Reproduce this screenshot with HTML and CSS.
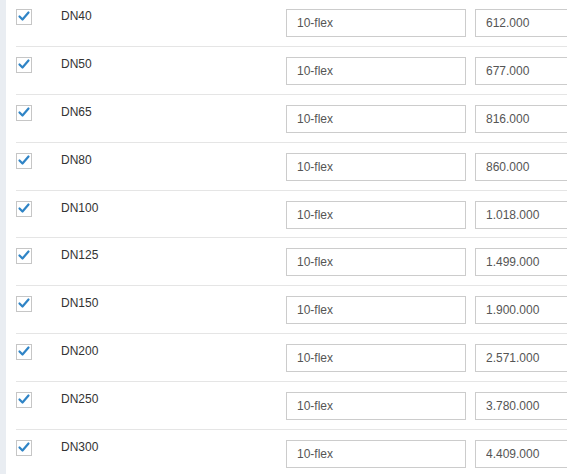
FILE: index.html
```html
<!DOCTYPE html>
<html>
<head>
<meta charset="utf-8">
<link rel="stylesheet" href="styles.css">
</head>
<body>
<div class="page">
  <div class="strip"></div>
  <div class="list">
    <div class="row"><span class="cb"><svg viewBox="0 0 14 14"><path d="M2.5 6.5 L5.5 9.5 L11.5 2.5" /></svg></span><span class="label">DN40</span><input class="field" value="10-flex"><input class="field" value="612.000"></div>
    <div class="row"><span class="cb"><svg viewBox="0 0 14 14"><path d="M2.5 6.5 L5.5 9.5 L11.5 2.5" /></svg></span><span class="label">DN50</span><input class="field" value="10-flex"><input class="field" value="677.000"></div>
    <div class="row"><span class="cb"><svg viewBox="0 0 14 14"><path d="M2.5 6.5 L5.5 9.5 L11.5 2.5" /></svg></span><span class="label">DN65</span><input class="field" value="10-flex"><input class="field" value="816.000"></div>
    <div class="row"><span class="cb"><svg viewBox="0 0 14 14"><path d="M2.5 6.5 L5.5 9.5 L11.5 2.5" /></svg></span><span class="label">DN80</span><input class="field" value="10-flex"><input class="field" value="860.000"></div>
    <div class="row"><span class="cb"><svg viewBox="0 0 14 14"><path d="M2.5 6.5 L5.5 9.5 L11.5 2.5" /></svg></span><span class="label">DN100</span><input class="field" value="10-flex"><input class="field" value="1.018.000"></div>
    <div class="row"><span class="cb"><svg viewBox="0 0 14 14"><path d="M2.5 6.5 L5.5 9.5 L11.5 2.5" /></svg></span><span class="label">DN125</span><input class="field" value="10-flex"><input class="field" value="1.499.000"></div>
    <div class="row"><span class="cb"><svg viewBox="0 0 14 14"><path d="M2.5 6.5 L5.5 9.5 L11.5 2.5" /></svg></span><span class="label">DN150</span><input class="field" value="10-flex"><input class="field" value="1.900.000"></div>
    <div class="row"><span class="cb"><svg viewBox="0 0 14 14"><path d="M2.5 6.5 L5.5 9.5 L11.5 2.5" /></svg></span><span class="label">DN200</span><input class="field" value="10-flex"><input class="field" value="2.571.000"></div>
    <div class="row"><span class="cb"><svg viewBox="0 0 14 14"><path d="M2.5 6.5 L5.5 9.5 L11.5 2.5" /></svg></span><span class="label">DN250</span><input class="field" value="10-flex"><input class="field" value="3.780.000"></div>
    <div class="row"><span class="cb"><svg viewBox="0 0 14 14"><path d="M2.5 6.5 L5.5 9.5 L11.5 2.5" /></svg></span><span class="label">DN300</span><input class="field" value="10-flex"><input class="field" value="4.409.000"></div>
  </div>
</div>
</body>
</html>
```
FILE: styles.css
```css
html, body {
  margin: 0;
  padding: 0;
  background: #fff;
  overflow: hidden;
  font-family: "Liberation Sans", Arial, sans-serif;
  font-size: 12px;
  color: #333;
}
.page {
  display: flex;
  height: 474px;
  overflow: hidden;
}
.strip {
  width: 6px;
  flex: none;
  background: #e9edf2;
}
.list {
  flex: 1;
  padding-left: 10px;
  margin-top: -1px;
}
.row {
  display: grid;
  grid-template-columns: 16px 254px 180px 180px;
  align-items: start;
  padding-top: 10px;
  box-sizing: border-box;
  height: 47.875px;
  border-bottom: 1px solid #e5e5e5;
}
.cb {
  width: 16px;
  height: 16px;
  box-sizing: border-box;
  border: 1px solid #c6c6c6;
  background: #fff;
  display: block;
}
.cb svg {
  display: block;
  width: 14px;
  height: 14px;
  fill: none;
  stroke: #2f84c6;
  stroke-width: 2.2;
  stroke-linecap: round;
  stroke-linejoin: round;
}
.label {
  margin-left: 29px;
  line-height: 14px;
  color: #333;
}
.field {
  width: 180px;
  height: 28px;
  box-sizing: border-box;
  border: 1px solid #ccc;
  padding: 0 10px;
  margin: 0;
  font-family: "Liberation Sans", Arial, sans-serif;
  font-size: 12px;
  color: #555;
  background: #fff;
  outline: none;
}
.field + .field {
  margin-left: 9px;
}
```
